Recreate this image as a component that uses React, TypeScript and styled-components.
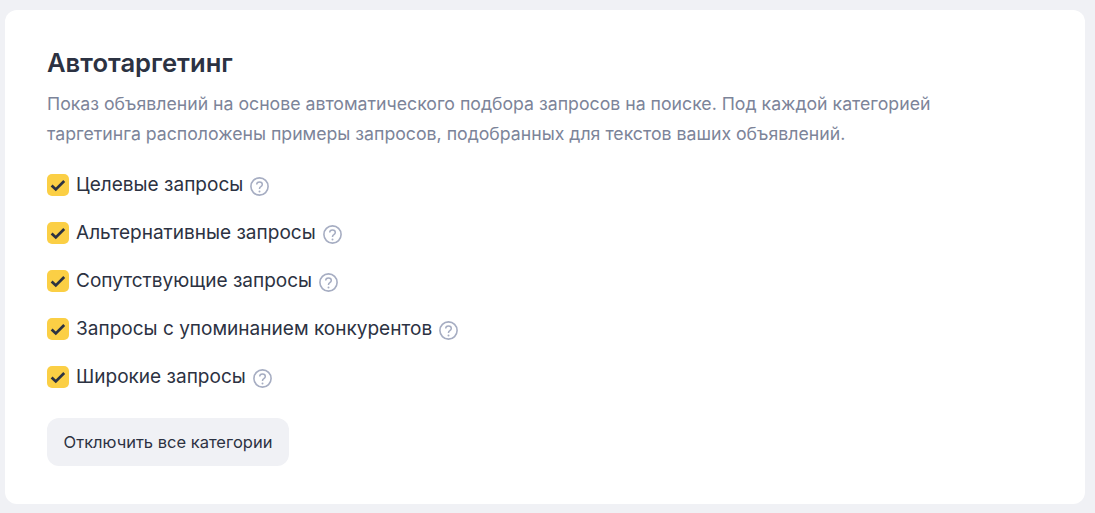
import styled, { createGlobalStyle } from "styled-components";

const categories = [
  "Целевые запросы",
  "Альтернативные запросы",
  "Сопутствующие запросы",
  "Запросы с упоминанием конкурентов",
  "Широкие запросы",
];

export default function App() {
  return (
    <>
      <GlobalStyle />
      <Page>
        <Card>
          <Title>Автотаргетинг</Title>
          <Description>
            Показ объявлений на основе автоматического подбора запросов на поиске. Под каждой категорией
            <br />
            таргетинга расположены примеры запросов, подобранных для текстов ваших объявлений.
          </Description>
          <List>
            {categories.map((name) => (
              <Row key={name}>
                <CheckBox>
                  <svg width="16" height="13" viewBox="0 0 16 13" fill="none">
                    <path d="M1.6 6.4 5.8 10.4 14.2 2" stroke="#2c3242" strokeWidth="2.7" />
                  </svg>
                </CheckBox>
                <RowLabel>{name}</RowLabel>
                <Hint>
                  <svg width="19" height="19" viewBox="0 0 19 19" fill="none">
                    <circle cx="9.5" cy="9.5" r="8.6" stroke="#a6adc2" strokeWidth="1.6" />
                    <path
                      d="M6.7 7.6c0-1.6 1.2-2.7 2.8-2.7s2.8 1 2.8 2.5c0 1.2-.7 1.7-1.5 2.3-.9.6-1.3 1.1-1.3 2v.4"
                      stroke="#a6adc2"
                      strokeWidth="1.5"
                    />
                    <circle cx="9.5" cy="14.4" r="1" fill="#a6adc2" />
                  </svg>
                </Hint>
              </Row>
            ))}
          </List>
          <DisableButton>Отключить все категории</DisableButton>
        </Card>
      </Page>
    </>
  );
}

const GlobalStyle = createGlobalStyle`
  html, body {
    margin: 0;
    padding: 0;
    background: #f0f1f5;
  }
`;

const Page = styled.div`
  box-sizing: border-box;
  width: 1095px;
  height: 513px;
  padding: 10px 10px 9px 5px;
  font-family: Inter, "Noto Sans", sans-serif;
  color: #2c3242;
`;

const Card = styled.section`
  box-sizing: border-box;
  height: 494px;
  padding: 36px 42px 0;
  background: #fff;
  border-radius: 12px;
`;

const Title = styled.h2`
  margin: 0;
  font-size: 25.6px;
  line-height: 34px;
  font-weight: 600;
`;

const Description = styled.p`
  margin: 9px 0 0;
  font-size: 17.7px;
  line-height: 30px;
  color: #7c8499;
  white-space: nowrap;
`;

const List = styled.div`
  display: flex;
  flex-direction: column;
  gap: 24px;
  margin-top: 24px;
`;

const Row = styled.label`
  display: flex;
  align-items: center;
  height: 24px;
`;

const CheckBox = styled.span`
  display: flex;
  align-items: center;
  justify-content: center;
  width: 22px;
  height: 22px;
  border-radius: 5px;
  background: #fbcf45;
`;

const RowLabel = styled.span`
  margin-left: 7px;
  font-size: 19.05px;
  line-height: 24px;
`;

const Hint = styled.span`
  display: flex;
  margin: 2px 0 0 7px;
`;

const DisableButton = styled.button`
  display: block;
  width: 242px;
  height: 48px;
  margin-top: 29px;
  padding: 0;
  border: 0;
  border-radius: 12px;
  background: #f0f1f5;
  font-family: inherit;
  font-size: 16.5px;
  color: #2c3242;
`;
